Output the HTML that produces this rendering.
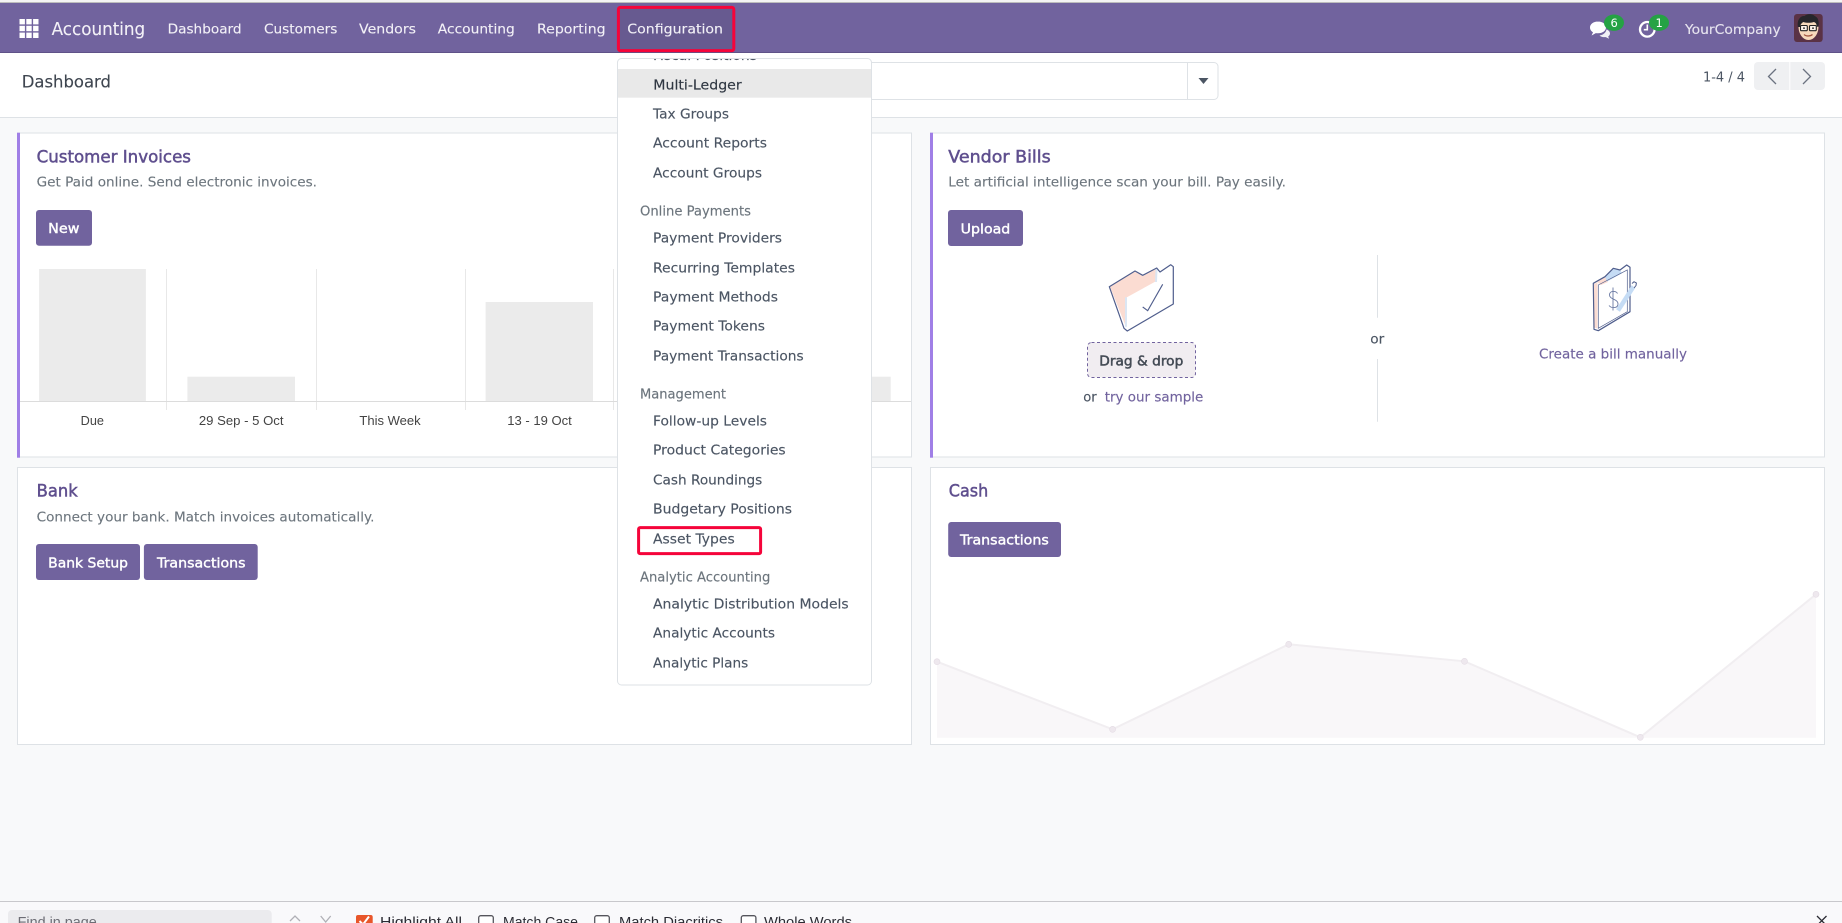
<!DOCTYPE html>
<html lang="en">
<head>
<meta charset="utf-8">
<title>Accounting Dashboard</title>
<style>
html,body{margin:0;padding:0;width:1842px;height:923px;overflow:hidden;background:#f8f9fa}
svg{display:block}
text{font-family:"DejaVu Sans","Liberation Sans",sans-serif;font-size:13.5px;fill:#4b5563;white-space:pre}
.nav{fill:#f3f1f7;font-size:13.5px;stroke:#f3f1f7;stroke-width:.12px}
.m{fill:#4b5563;stroke:#4b5563;stroke-width:.15px}
.h{fill:#6c757d;font-size:13px;stroke:#6c757d;stroke-width:.15px}
.t{fill:#5f4f8e;font-size:17px;stroke:#5f4f8e;stroke-width:.5px}
.s{fill:#6c757d;stroke:#6c757d;stroke-width:.12px}
.b{fill:#fff;stroke:#fff;stroke-width:.4px}
.c{font-family:"Liberation Sans",sans-serif;font-size:12.5px;fill:#444}
.l{fill:#71639e;stroke:#71639e;stroke-width:.15px}
.f{font-family:"Liberation Sans",sans-serif;font-size:14px;fill:#2b2b33}
</style>
</head>
<body>
<svg xmlns="http://www.w3.org/2000/svg" width="1842" height="923" viewBox="0 0 1842 923">
<defs>
<clipPath id="menuclip"><rect x="618" y="59" width="253" height="20"/></clipPath>
</defs>
<rect width="1842" height="923" fill="#f8f9fa"/>
<rect width="1842" height="2" fill="#f4f4f4"/>
<rect y="2" width="1842" height="1" fill="#bdbdbd"/>

<!-- navbar -->
<rect y="3" width="1842" height="49.5" fill="#71639e"/>
<rect y="52" width="1842" height="1" fill="#5f5288"/>
<g fill="#fff">
<rect x="19.5" y="19" width="5.4" height="5.4"/><rect x="26.3" y="19" width="5.4" height="5.4"/><rect x="33.1" y="19" width="5.4" height="5.4"/>
<rect x="19.5" y="25.8" width="5.4" height="5.4"/><rect x="26.3" y="25.8" width="5.4" height="5.4"/><rect x="33.1" y="25.8" width="5.4" height="5.4"/>
<rect x="19.5" y="32.6" width="5.4" height="5.4"/><rect x="26.3" y="32.6" width="5.4" height="5.4"/><rect x="33.1" y="32.6" width="5.4" height="5.4"/>
</g>
<text x="51.6" y="35" class="nav" style="font-size:17.5px" textLength="93.6" lengthAdjust="spacingAndGlyphs">Accounting</text>
<text x="167.6" y="33.5" class="nav" textLength="74" lengthAdjust="spacingAndGlyphs">Dashboard</text>
<text x="264" y="33.5" class="nav" textLength="73.4" lengthAdjust="spacingAndGlyphs">Customers</text>
<text x="359" y="33.5" class="nav" textLength="57" lengthAdjust="spacingAndGlyphs">Vendors</text>
<text x="437.8" y="33.5" class="nav" textLength="77" lengthAdjust="spacingAndGlyphs">Accounting</text>
<text x="537" y="33.5" class="nav" textLength="68.6" lengthAdjust="spacingAndGlyphs">Reporting</text>
<rect x="618" y="7" width="116" height="44" fill="#675a90"/>
<text x="627.3" y="33.5" class="nav" textLength="95.7" lengthAdjust="spacingAndGlyphs">Configuration</text>
<rect x="618.4" y="7.4" width="115.4" height="43.2" rx="2" fill="none" stroke="#f5043a" stroke-width="3"/>

<!-- systray -->
<path d="M1598 21.5c-4.600 0-8 2.600-8 6 0 2 1.200 3.700 3 4.800l-1.400 3.200 4.200-2.400c.7.100 1.400.2 2.200.2 4.600 0 8-2.600 8-5.800s-3.400-6-8-6z" fill="#fff"/>
<path d="M1606.500 29.500c1.800.7 3.500 2 3.500 4 0 1.300-.8 2.300-1.800 3l.8 2.200-3.200-1.600c-2.500.3-5-.3-6.300-1.600 3.300-.4 6.300-2.500 7-6z" fill="#fff" opacity=".9"/>
<ellipse cx="1614" cy="22.700" rx="10" ry="8.200" fill="#25a244"/>
<text x="1610.500" y="27" style="font-size:11.500px;fill:#fff">6</text>
<circle cx="1647.300" cy="29.300" r="7.300" fill="none" stroke="#fff" stroke-width="2.300"/>
<path d="M1647.300 24.500v5.200h-3.500" fill="none" stroke="#fff" stroke-width="1.600"/>
<ellipse cx="1659" cy="22.700" rx="10" ry="8.200" fill="#25a244"/>
<text x="1655.500" y="27" style="font-size:11.500px;fill:#fff">1</text>
<text x="1685" y="34" class="nav" style="fill:#e6e3ee" textLength="95.700" lengthAdjust="spacingAndGlyphs">YourCompany</text>
<rect x="1794" y="14" width="28.700" height="28" rx="3" fill="#5a3245"/>
<path d="M1798.500 26.500c0-6 4-9 10-9s10 3 10 9c0 7.500-4.500 13.500-10 13.500s-10-6-10-13.500z" fill="#f7d9bc"/>
<path d="M1798 27c-1.500-7.500 3-11.500 6.500-11 2-2 6-2.500 9-1 1.500 1.500 4 2 4.500 4.500 1 2.500.8 5 .3 7.500l-1.500-.5c-.2-2.500-1-4-3-4.500-3 1-7.500 1-10.500 0-1.800 1-3 2.500-3.300 5z" fill="#26262b"/>
<rect x="1800.500" y="25.500" width="6.800" height="5.200" rx="1" fill="#fdf3ea" stroke="#222" stroke-width="1.100"/>
<rect x="1809.500" y="25.500" width="6.800" height="5.200" rx="1" fill="#fdf3ea" stroke="#222" stroke-width="1.100"/>
<circle cx="1804" cy="28.100" r=".9" fill="#222"/><circle cx="1813" cy="28.100" r=".9" fill="#222"/>
<path d="M1804 34.500c2 2 6 2 8.500 0" fill="none" stroke="#a0523d" stroke-width="1.200"/>

<!-- control panel -->
<rect y="53" width="1842" height="64" fill="#fff"/>
<rect y="117" width="1842" height="1" fill="#dee2e6"/>
<text x="21.700" y="87.700" style="font-size:17px;fill:#3f4650;stroke:#3f4650;stroke-width:.12px" textLength="89.300" lengthAdjust="spacingAndGlyphs">Dashboard</text>
<rect x="700.500" y="62.500" width="517.500" height="37" rx="4" fill="#fff" stroke="#dee2e6"/>
<path d="M1187.500 62.500v37" stroke="#dee2e6"/>
<path d="M1198.500 78h10l-5 6z" fill="#4b5563"/>
<text x="1703" y="81.700" style="fill:#4b5563" textLength="42" lengthAdjust="spacingAndGlyphs">1-4 / 4</text>
<path d="M1758 62h31.300v28H1758a4 4 0 0 1-4-4V66a4 4 0 0 1 4-4z" fill="#eff0f2"/>
<path d="M1790.300 62H1821a4 4 0 0 1 4 4v20a4 4 0 0 1-4 4h-30.700z" fill="#eff0f2"/>
<path d="M1776 69l-7.500 7.500 7.500 7.500M1803 69l7.500 7.500-7.500 7.500" fill="none" stroke="#6b7280" stroke-width="1.300"/>

<!-- Customer Invoices card -->
<rect x="17.500" y="133" width="894" height="324" fill="#fff" stroke="#dee2e6"/>
<rect x="17" y="132.700" width="3" height="325" fill="#a07fe6"/>
<text x="36.600" y="162.500" class="t" textLength="154.400" lengthAdjust="spacingAndGlyphs">Customer Invoices</text>
<text x="36.600" y="186.500" class="s" textLength="280.400" lengthAdjust="spacingAndGlyphs">Get Paid online. Send electronic invoices.</text>
<rect x="36" y="210" width="56" height="35.700" rx="3" fill="#71639e"/>
<text x="48.200" y="233" class="b" textLength="31.300" lengthAdjust="spacingAndGlyphs">New</text>
<g fill="#ebebeb">
<rect x="39.100" y="269" width="106.800" height="132"/>
<rect x="187.400" y="376.700" width="107.600" height="24.300"/>
<rect x="485.600" y="302" width="107.400" height="99"/>
<rect x="784" y="376.700" width="106.700" height="24.300"/>
</g>
<g stroke="#e8e8e8" stroke-width="1">
<path d="M166.500 269v141M316.500 269v141M465.500 269v141M613.500 269v141"/>
</g>
<path d="M20 401.500H911" stroke="#dcdcdc"/>
<text x="80.700" y="425" class="c" textLength="23.300" lengthAdjust="spacingAndGlyphs">Due</text>
<text x="198.900" y="425" class="c" textLength="84.600" lengthAdjust="spacingAndGlyphs">29 Sep - 5 Oct</text>
<text x="359.400" y="425" class="c" textLength="61.300" lengthAdjust="spacingAndGlyphs">This Week</text>
<text x="507.300" y="425" class="c" textLength="64.500" lengthAdjust="spacingAndGlyphs">13 - 19 Oct</text>

<!-- Vendor Bills card -->
<rect x="930.500" y="133" width="894" height="324" fill="#fff" stroke="#dee2e6"/>
<rect x="930" y="132.700" width="3" height="325" fill="#a07fe6"/>
<text x="948.300" y="162.400" class="t" textLength="102.400" lengthAdjust="spacingAndGlyphs">Vendor Bills</text>
<text x="948.300" y="186.500" class="s" textLength="337.700" lengthAdjust="spacingAndGlyphs">Let artificial intelligence scan your bill. Pay easily.</text>
<rect x="948" y="210" width="75" height="36" rx="3" fill="#71639e"/>
<text x="960.700" y="233.500" class="b" textLength="49.600" lengthAdjust="spacingAndGlyphs">Upload</text>

<path d="M1109.300 286.700L1135 271l7.700 4.300 14-7.300 3.300 4 10.700-7.300 2.600 2V304l-46 27-3.300-2.700z" fill="#fff"/>
<path d="M1110 286.700L1135 271.700l7.700 4.300 13.300-7-.5 12.500-29.500 16.300-.5 28z" fill="#fbdcd2"/>
<path d="M1126 297.300v29.500" stroke="#dbe6f3" stroke-width="2"/>
<path d="M1156.500 269l-.5 13" stroke="#dbe6f3" stroke-width="2"/>
<path d="M1109.300 286.700L1135 271l7.700 4.300 14-7.300 3.300 4 10.700-7.300 2.600 2V304l-46 27-3.300-2.700z" fill="none" stroke="#4f5d8c" stroke-width="1.200" stroke-linejoin="round"/>
<path d="M1142.700 307l5 3.700 15-26.400" fill="none" stroke="#4f5d8c" stroke-width="1.100"/>

<rect x="1087.500" y="342.500" width="108" height="35" rx="4" fill="#f1edf1" stroke="#71639e" stroke-dasharray="3 2.500"/>
<text x="1099.300" y="365.500" style="fill:#444b55;stroke:#444b55;stroke-width:.5px" textLength="84" lengthAdjust="spacingAndGlyphs">Drag &amp; drop</text>
<text x="1083.300" y="401.500" class="m" textLength="13.400" lengthAdjust="spacingAndGlyphs">or</text>
<text x="1104.700" y="401.500" class="l" textLength="98.600" lengthAdjust="spacingAndGlyphs">try our sample</text>

<path d="M1377.500 255v62.700M1377.500 359v62.700" stroke="#dee2e6"/>
<text x="1370.300" y="343.700" class="m" textLength="14" lengthAdjust="spacingAndGlyphs">or</text>

<path d="M1593.300 283.300l11.700-6.600 8.300-8.400 6.700 1.700 6.700-5 3.300 2.300v44.400l-31.700 19-4.300-1.400z" fill="#fff"/>
<path d="M1594 284l3.500-1.500v46l-3.500-1z" fill="#fbdcd2"/>
<path d="M1597 282l8-5 3 5-7 3z" fill="#fbdcd2"/>
<path d="M1605 276.700l8.300-8.400 6.700 1.700 2 3.300-15 8.300z" fill="#c5dcf5"/>
<path d="M1593.300 283.300l11.700-6.600 8.300-8.400 6.700 1.700 6.700-5 3.300 2.300v44.400l-31.700 19-4.300-1.400z" fill="none" stroke="#4f5d8c" stroke-width="1.200" stroke-linejoin="round"/>
<path d="M1598.300 285l29-15v41.700l-29 16.600z" fill="none" stroke="#4f5d8c" stroke-width=".7"/>
<path d="M1617.500 293.500c-1.500-3-8-3-8 1.500 0 4.700 8.500 3.700 8.500 9 0 4.500-6.500 4.500-9 1.500M1613 287.500v23" fill="none" stroke="#6b7aa3" stroke-width=".9"/>
<path d="M1618 310.500l15.500-24" stroke="#c5dcf5" stroke-width="4.500"/>
<path d="M1632 283.500l2-1.800 2.400 1.300-.4 2.500-2 2.500" fill="#fff" stroke="#4f5d8c" stroke-width="1"/>
<text x="1539" y="358.500" class="l" textLength="148" lengthAdjust="spacingAndGlyphs">Create a bill manually</text>

<!-- Bank card -->
<rect x="17.500" y="467.500" width="894" height="277" fill="#fff" stroke="#dee2e6"/>
<text x="36.600" y="496.500" class="t" textLength="41.100" lengthAdjust="spacingAndGlyphs">Bank</text>
<text x="36.600" y="521.500" class="s" textLength="337.800" lengthAdjust="spacingAndGlyphs">Connect your bank. Match invoices automatically.</text>
<rect x="36" y="544" width="104" height="36" rx="3" fill="#71639e"/>
<text x="48.200" y="567.500" class="b" textLength="79.800" lengthAdjust="spacingAndGlyphs">Bank Setup</text>
<rect x="143.900" y="544" width="113.800" height="36" rx="3" fill="#71639e"/>
<text x="157" y="567.500" class="b" textLength="88.500" lengthAdjust="spacingAndGlyphs">Transactions</text>

<!-- Cash card -->
<rect x="930.500" y="467.500" width="894" height="277" fill="#fff" stroke="#dee2e6"/>
<text x="948.800" y="496.500" class="t" textLength="39.400" lengthAdjust="spacingAndGlyphs">Cash</text>
<rect x="948.200" y="522" width="112.800" height="35" rx="3" fill="#71639e"/>
<text x="960" y="544.700" class="b" textLength="88.800" lengthAdjust="spacingAndGlyphs">Transactions</text>
<path d="M937 661.700L1112.600 729.300 1288.700 644.300 1464.500 661.300 1640.300 737.300 1816 594.300V737.700H937z" fill="#f9f7f9"/>
<path d="M937 661.700L1112.600 729.300 1288.700 644.300 1464.500 661.300 1640.300 737.300 1816 594.300" fill="none" stroke="#f1eef1" stroke-width="2"/>
<g fill="#eee8ee" stroke="#e4dce4" stroke-width=".6">
<circle cx="937" cy="661.700" r="3"/><circle cx="1112.600" cy="729.300" r="3"/><circle cx="1288.700" cy="644.300" r="3"/><circle cx="1464.500" cy="661.300" r="3"/><circle cx="1640.300" cy="737.300" r="3"/><circle cx="1816" cy="594.300" r="3"/>
</g>

<!-- dropdown -->
<rect x="617.500" y="58.500" width="254" height="626.500" rx="4" fill="#fff" stroke="#dee2e6"/>
<g clip-path="url(#menuclip)"><text x="653" y="60" class="m" textLength="104" lengthAdjust="spacingAndGlyphs">Fiscal Positions</text></g>
<rect x="618" y="69" width="253" height="28.700" fill="#e9e9e9"/>
<text x="653.300" y="89.500" style="fill:#2f3742;stroke:#2f3742;stroke-width:.15px" textLength="88.400" lengthAdjust="spacingAndGlyphs">Multi-Ledger</text>
<text x="653" y="118.600" class="m" textLength="76" lengthAdjust="spacingAndGlyphs">Tax Groups</text>
<text x="653" y="147.700" class="m" textLength="114" lengthAdjust="spacingAndGlyphs">Account Reports</text>
<text x="653" y="177.600" class="m" textLength="109" lengthAdjust="spacingAndGlyphs">Account Groups</text>
<text x="640" y="215.300" class="h" textLength="111" lengthAdjust="spacingAndGlyphs">Online Payments</text>
<text x="653" y="242.600" class="m" textLength="129" lengthAdjust="spacingAndGlyphs">Payment Providers</text>
<text x="653" y="272.500" class="m" textLength="142" lengthAdjust="spacingAndGlyphs">Recurring Templates</text>
<text x="653" y="301.300" class="m" textLength="125" lengthAdjust="spacingAndGlyphs">Payment Methods</text>
<text x="653" y="330.500" class="m" textLength="112" lengthAdjust="spacingAndGlyphs">Payment Tokens</text>
<text x="653" y="360.500" class="m" textLength="150.700" lengthAdjust="spacingAndGlyphs">Payment Transactions</text>
<text x="640" y="398.700" class="h" textLength="86" lengthAdjust="spacingAndGlyphs">Management</text>
<text x="653" y="425.500" class="m" textLength="114" lengthAdjust="spacingAndGlyphs">Follow-up Levels</text>
<text x="653" y="454.500" class="m" textLength="132.700" lengthAdjust="spacingAndGlyphs">Product Categories</text>
<text x="653" y="484.500" class="m" textLength="109.300" lengthAdjust="spacingAndGlyphs">Cash Roundings</text>
<text x="653" y="513.500" class="m" textLength="139" lengthAdjust="spacingAndGlyphs">Budgetary Positions</text>
<text x="653" y="543.500" class="m" textLength="81.700" lengthAdjust="spacingAndGlyphs">Asset Types</text>
<rect x="638.600" y="527.600" width="122" height="26" rx="1.500" fill="none" stroke="#f5043a" stroke-width="3"/>
<text x="640" y="581.500" class="h" textLength="130.300" lengthAdjust="spacingAndGlyphs">Analytic Accounting</text>
<text x="653" y="608.500" class="m" textLength="195.700" lengthAdjust="spacingAndGlyphs">Analytic Distribution Models</text>
<text x="653" y="637.500" class="m" textLength="122" lengthAdjust="spacingAndGlyphs">Analytic Accounts</text>
<text x="653" y="667.500" class="m" textLength="95.300" lengthAdjust="spacingAndGlyphs">Analytic Plans</text>

<!-- find bar -->
<rect y="901" width="1842" height="22" fill="#f9f9fb"/>
<rect y="901" width="1842" height="1" fill="#c8c8cc"/>
<rect x="8" y="910" width="263.700" height="20" rx="4" fill="#ebebee"/>
<text x="17.600" y="926.500" class="f" style="fill:#6d6d75" textLength="79.200" lengthAdjust="spacingAndGlyphs">Find in page</text>
<path d="M290 921l5-5 5 5M320.700 916l5 6 5-6" fill="none" stroke="#b0b0b6" stroke-width="1.300"/>
<rect x="356" y="915" width="16.700" height="16" rx="2" fill="#e8562a"/>
<path d="M359.500 921l3.500 3.500 6-8" fill="none" stroke="#fff" stroke-width="2"/>
<text x="380" y="926.500" class="f" textLength="82" lengthAdjust="spacingAndGlyphs">Highlight All</text>
<rect x="478.700" y="915.700" width="14.600" height="15" rx="2" fill="#fff" stroke="#55555c" stroke-width="1.300"/>
<text x="503" y="926.500" class="f" textLength="75" lengthAdjust="spacingAndGlyphs">Match Case</text>
<rect x="594.700" y="915.700" width="14.600" height="15" rx="2" fill="#fff" stroke="#55555c" stroke-width="1.300"/>
<text x="619" y="926.500" class="f" textLength="104" lengthAdjust="spacingAndGlyphs">Match Diacritics</text>
<rect x="741.300" y="915.700" width="14.600" height="15" rx="2" fill="#fff" stroke="#55555c" stroke-width="1.300"/>
<text x="764" y="926.500" class="f" textLength="88" lengthAdjust="spacingAndGlyphs">Whole Words</text>
<path d="M1817 916l9.500 9.500M1826.500 916l-9.500 9.500" stroke="#2b2b33" stroke-width="1.300"/>
</svg>
</body>
</html>
